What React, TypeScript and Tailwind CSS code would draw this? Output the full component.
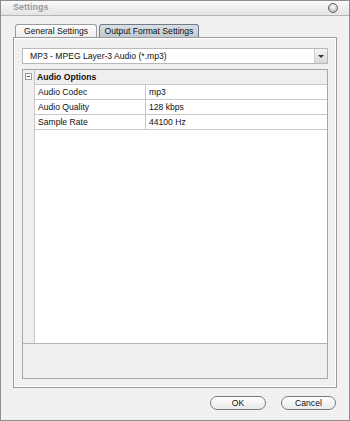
import React from "react";

const stripes =
  "bg-[repeating-linear-gradient(to_bottom,#ededed_0px,#ededed_1px,#f4f4f4_1px,#f4f4f4_2px)]";

const rows = [
  { name: "Audio Codec", value: "mp3" },
  { name: "Audio Quality", value: "128 kbps" },
  { name: "Sample Rate", value: "44100 Hz" },
];

export default function App() {
  return (
    <div
      className={`flex h-[421px] w-[350px] flex-col border border-[#8e8e8e] ${stripes} text-[8.6px] text-[#111]`}
      style={{ fontFamily: '"Liberation Sans", Arial, sans-serif' }}
    >
      {/* title bar */}
      <div className="flex h-[15px] items-center justify-between border-b border-[#b5b5b5] bg-[linear-gradient(to_bottom,#fafafa,#e4e4e4)] pl-[12px] pr-[11px]">
        <span className="text-[9px] font-bold text-[#9a9a9a]">Settings</span>
        <span className="h-[10px] w-[10px] rounded-full border border-[#5f5f5f] bg-[radial-gradient(circle_at_50%_35%,#ffffff,#a9a9a9)]" />
      </div>

      <div className="flex flex-1 flex-col px-[12px] pt-[8px]">
        {/* tabs */}
        <div className="flex h-[13px] items-end gap-[2px] pl-[2px]">
          <div className="flex h-[13px] w-[82px] items-center justify-center rounded-t-[3px] border border-b-0 border-[#9c9c9c] bg-[linear-gradient(to_bottom,#ffffff,#ececec)]">
            General Settings
          </div>
          <div className="flex h-[13px] w-[100px] items-center justify-center rounded-t-[3px] border border-b-0 border-[#6f7c88] bg-[linear-gradient(to_bottom,#d9e0e6,#bfc9d2)]">
            Output Format Settings
          </div>
        </div>

        {/* tab panel */}
        <div
          className={`flex h-[351px] w-[324px] flex-col border border-[#9a9a9a] shadow-[inset_1px_1px_0_#ffffff,inset_-1px_-1px_0_#ffffff] ${stripes} px-[8px] pb-[8px] pt-[10px]`}
        >
          {/* dropdown */}
          <div className="flex h-[16px] w-[306px] items-center justify-between border border-[#b9b9b9] bg-white">
            <span className="pl-[7px]">MP3 - MPEG Layer-3 Audio (*.mp3)</span>
            <span className="flex h-[14px] w-[13px] items-center justify-center border-l border-[#d0d0d0] bg-[linear-gradient(to_bottom,#f4f4f4,#d8d8d8)]">
              <span className="h-0 w-0 border-x-[3px] border-t-[3px] border-x-transparent border-t-[#333]" />
            </span>
          </div>

          {/* property grid */}
          <div className="mt-[5px] flex w-[306px] flex-1 flex-col border border-[#a6a6a6] bg-white">
            <div className="flex flex-1">
              <div className="w-[12px] border-r border-[#c8c8c8] bg-[#efefef]">
                <div className="mt-[3px] ml-[2px] flex h-[7px] w-[7px] items-center justify-center border border-[#9a9a9a] bg-white">
                  <span className="h-px w-[3px] bg-[#555]" />
                </div>
              </div>
              <div className="flex flex-1 flex-col">
                <div className="flex h-[15px] items-center border-b border-[#c8c8c8] bg-[#efefef] pl-[2px] font-bold">
                  Audio Options
                </div>
                {rows.map((r) => (
                  <div key={r.name} className="flex h-[15px] border-b border-[#c8c8c8]">
                    <div className="flex w-[111px] items-center border-r border-[#c8c8c8] pl-[3px]">{r.name}</div>
                    <div className="flex items-center pl-[3px]">{r.value}</div>
                  </div>
                ))}
              </div>
            </div>
            <div className="h-[35px] border-t border-[#b4b4b4] bg-[#efefef]" />
          </div>
        </div>

        {/* buttons */}
        <div className="flex justify-end gap-[15px] pr-[1px] pt-[8px]">
          <button className="flex h-[14px] w-[56px] items-center justify-center rounded-full border border-[#7a7a7a] bg-[linear-gradient(to_bottom,#ffffff,#e9e9e9)] text-[8.6px]">
            OK
          </button>
          <button className="flex h-[14px] w-[55px] items-center justify-center rounded-full border border-[#7a7a7a] bg-[linear-gradient(to_bottom,#ffffff,#e9e9e9)] text-[8.6px]">
            Cancel
          </button>
        </div>
      </div>
    </div>
  );
}
